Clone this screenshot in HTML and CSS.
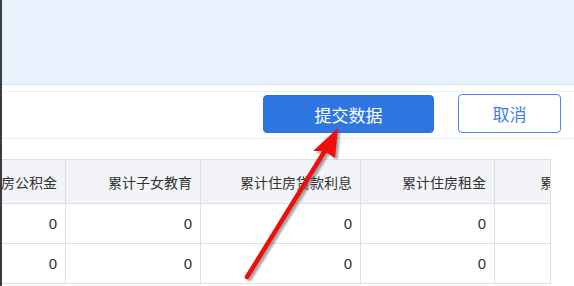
FILE: index.html
```html
<!DOCTYPE html>
<html lang="zh-CN">
<head>
    <meta charset="UTF-8">
    <title>专项附加扣除</title>
    <link rel="stylesheet" href="styles.css">
</head>
<body>
    <!-- Top info panel -->
    <div class="top-panel"></div>
    <div class="divider"></div>

    <!-- Action buttons -->
    <div class="actions">
        <button class="btn btn-primary">提交数据</button>
        <button class="btn btn-plain">取消</button>
    </div>

    <!-- Data table (scrolled horizontally) -->
    <div class="table-wrap">
        <table class="data-table">
            <thead>
                <tr>
                    <th class="c1">累计住房公积金</th>
                    <th class="c2">累计子女教育</th>
                    <th class="c3">累计住房贷款利息</th>
                    <th class="c4">累计住房租金</th>
                    <th class="c5">累计赡养老人</th>
                </tr>
            </thead>
            <tbody>
                <tr>
                    <td>0</td><td>0</td><td>0</td><td>0</td><td>0</td>
                </tr>
                <tr>
                    <td>0</td><td>0</td><td>0</td><td>0</td><td>0</td>
                </tr>
            </tbody>
        </table>
    </div>

    <!-- Red annotation arrow -->
    <svg class="arrow" width="574" height="286" viewBox="0 0 574 286">
        <defs>
            <filter id="soft" x="-20%" y="-20%" width="140%" height="140%">
                <feGaussianBlur stdDeviation="1.2"/>
            </filter>
        </defs>
        <g fill="#555" stroke="#555" opacity="0.55" filter="url(#soft)" transform="translate(2.5,2)">
            <line x1="247" y1="277" x2="326" y2="149" stroke-width="4.5" stroke-linecap="round"/>
            <polygon points="338,128 313,151 324,151 335,158" stroke="none"/>
        </g>
        <g fill="#f20d0d" stroke="#f20d0d">
            <line x1="247" y1="277" x2="326" y2="149" stroke-width="4.5" stroke-linecap="round"/>
            <polygon points="338,128 313,151 324,151 335,158" stroke="none"/>
        </g>
    </svg>
</body>
</html>
```

FILE: styles.css
```css
/* Global */
* {
    margin: 0;
    padding: 0;
    box-sizing: border-box;
}

body {
    position: relative;
    height: 286px;
    overflow: hidden;
    background: #fff;
    border-left: 2px solid #3d3d3d;
    font-family: "Liberation Sans", "Noto Sans CJK SC", sans-serif;
    color: #333;
}

/* Top panel */
.top-panel {
    height: 85px;
    background: #e8f2fc;
    border-bottom: 1px solid #d7e3ef;
}

.divider {
    margin-top: 6px;
    border-top: 1px solid #f0f1f3;
}

/* Buttons */
.actions {
    display: flex;
    justify-content: flex-end;
    align-items: flex-end;
    gap: 24px;
    padding: 2px 13px 5px 0;
    border-bottom: 1px solid #ebedf0;
}

.btn {
    font-family: "Noto Sans CJK SC", sans-serif;
    font-size: 17px;
    border-radius: 4px;
    cursor: pointer;
    height: 39px;
}

.btn-primary {
    width: 171px;
    height: 38px;
    background: #2e77e1;
    border: 1px solid #2a70d8;
    color: #fff;
}

.btn-plain {
    width: 103px;
    background: #fff;
    border: 1px solid #4a8be4;
    color: #3d80df;
}

/* Table */
.table-wrap {
    margin-top: 20px;
    width: 549px;
    overflow: hidden;
    border-right: 1px solid #dcdfe6;
}

.data-table {
    margin-left: -57px;
    border-collapse: collapse;
    table-layout: fixed;
    width: 687px;
    font-family: "Noto Sans CJK SC", sans-serif;
    font-size: 14px;
}

.data-table th,
.data-table td {
    border: 1px solid #dcdfe6;
    text-align: right;
    padding: 0 8px;
    white-space: nowrap;
    overflow: hidden;
    color: #333;
}

.data-table th {
    height: 44px;
    background: #f2f4f8;
    font-weight: normal;
}

.data-table td {
    height: 40px;
    font-family: "Liberation Sans", sans-serif;
    font-size: 15px;
}

.c1 { width: 120px; }
.c2 { width: 135px; }
.c3 { width: 160px; }
.c4 { width: 134px; }
.c5 { width: 138px; }

/* Annotation */
.arrow {
    position: absolute;
    left: -2px;
    top: 0;
    pointer-events: none;
}
```
